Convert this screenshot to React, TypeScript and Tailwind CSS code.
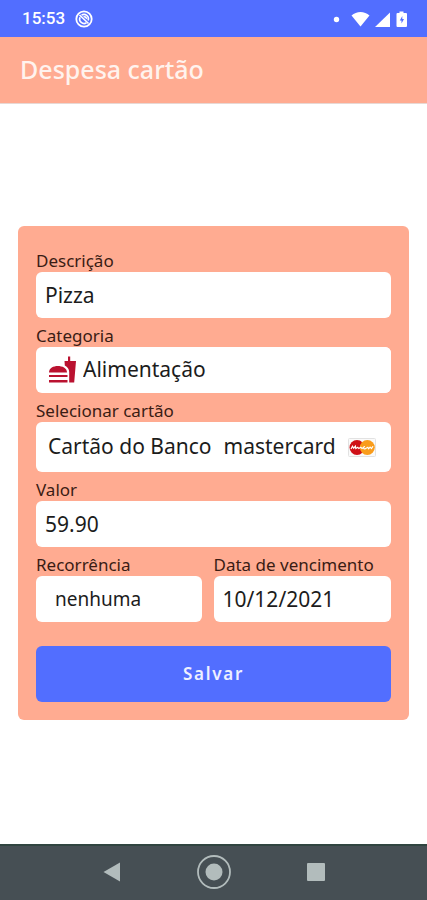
import React, { useState } from 'react';

const labelClass = 'block h-[22px] text-[17px] leading-[22px] text-[#3a1c14]';
const fieldClass = 'w-full min-w-0 rounded-md bg-white text-[#1c1c1c] outline-none appearance-none';

const FastFoodIcon = () => (
  <svg viewBox="0 0 28 28" className="h-7 w-7 shrink-0" fill="#ba1230" aria-hidden="true">
    <path d="M1 16.5C1 12 5.500 10 9.800 10s9.200 2 9.200 6.500z" />
    <path d="M1 19h18.500v2H1zM1 24h18.500v2.500H1z" />
    <path d="M16.500 5H20V.5h2.200V5H28l-1.800 21.500h-5V16c0-3-1.700-5-4.400-6.500z" />
  </svg>
);

const MastercardIcon = () => (
  <svg viewBox="0 0 28 19" className="h-[19px] w-7 shrink-0" aria-hidden="true">
    <rect x=".5" y=".5" width="27" height="18" rx="1" fill="#fafafa" stroke="#e2e2e2" />
    <circle cx="9" cy="9.500" r="7.500" fill="#cf1017" />
    <circle cx="19.300" cy="9.500" r="7.500" fill="#f99c1b" />
    <path
      d="M3 11l1.500-2.800 1.200 2 1.700-2 .4 2.300 2-1.300 1 1.300 2-1.300 1.200 1.300 2-1.200M17 8.500c-2 0-2 2.800.3 2.300l2.500-1.500.8 1.500 1.500-1.700 1.400 1.500L25 8.200"
      fill="none"
      stroke="#fff"
      strokeWidth="1.200"
    />
  </svg>
);

const StatusBar = () => (
  <div className="flex h-[37px] items-center justify-between bg-[#526eff] pr-5 pl-[22px] text-white">
    <div className="flex items-center gap-[10px]">
      <span className="font-[Roboto,sans-serif] text-[17px] font-medium">15:53</span>
      <svg viewBox="0 0 18 18" className="h-[18px] w-[18px]" fill="none" stroke="#fff" aria-hidden="true">
        <circle cx="9" cy="9" r="7.700" strokeWidth="1.800" />
        <path d="M5 7.200a4.500 4.500 0 0 0 6.500 5.600M6.500 5.200a4.500 4.500 0 0 1 6.700 5.300" strokeWidth="1.600" />
        <path d="M4.500 5l9 8.500" strokeWidth="1.700" />
        <path d="M8 6.500c2-1.500 4.500 0 4.300 3z" fill="#fff" stroke="none" />
      </svg>
    </div>
    <svg viewBox="0 0 75 18" className="h-[18px] w-[75px]" fill="#fff" aria-hidden="true">
      <circle cx="4.500" cy="9.500" r="2.700" />
      <path d="M19.500 5.500C24.500.8 32.500.8 37.500 5.500L28.500 16.500z" />
      <path d="M58 2.500v14.500H43z" />
      <path d="M67.500 3V1.500h4V3H74a1 1 0 0 1 1 1v12a1 1 0 0 1-1 1h-8.500a1 1 0 0 1-1-1V4a1 1 0 0 1 1-1z" />
      <path d="M70.300 6l-2.500 4.500h1.700V13.500l2.500-4.500h-1.700z" fill="#526eff" />
    </svg>
  </div>
);

const NavigationBar = () => (
  <nav className="flex h-14 items-center justify-center gap-[68px] border-t-2 border-[#304540] bg-[#464f54] pb-0.5">
    <button type="button" aria-label="Voltar" className="flex w-[34px] justify-center">
      <svg viewBox="0 0 18 20" className="h-5 w-[18px]" fill="#b2bcbc">
        <path d="M.5 10L17 .5v19z" />
      </svg>
    </button>
    <button type="button" aria-label="Início" className="flex w-[34px] justify-center">
      <svg viewBox="0 0 34 34" className="h-[34px] w-[34px]" fill="#b2bcbc">
        <circle cx="17" cy="17" r="16" fill="none" stroke="#b2bcbc" strokeWidth="1.800" />
        <circle cx="17" cy="17" r="8.500" />
      </svg>
    </button>
    <button type="button" aria-label="Recentes" className="flex w-[34px] justify-center">
      <span className="h-[18px] w-[18px] rounded-[1px] bg-[#b2bcbc]" />
    </button>
  </nav>
);

export default function App() {
  const [description, setDescription] = useState('Pizza');
  const [category, setCategory] = useState('Alimentação');
  const [value, setValue] = useState('59.90');
  const [recurrence, setRecurrence] = useState('nenhuma');
  const [dueDate, setDueDate] = useState('10/12/2021');

  return (
    <div className="flex min-h-screen flex-col bg-white font-['Noto_Sans',sans-serif]">
      <StatusBar />
      <header className="flex h-[67px] items-center border-b border-[#e8d8d4] bg-[#ffab91] px-5">
        <h1 className="text-[25px] font-medium text-[#fff3ee]">Despesa cartão</h1>
      </header>

      <main className="flex flex-1 flex-col justify-center px-[18px] pb-0.5">
        <form
          className="flex flex-col gap-[7px] rounded-md bg-[#ffab91] px-[18px] pt-6 pb-[18px]"
          onSubmit={(e) => e.preventDefault()}
        >
          <div>
            <label htmlFor="description" className={labelClass}>Descrição</label>
            <input
              id="description"
              className={`${fieldClass} h-[46px] px-[9px] text-[21px]`}
              value={description}
              onChange={(e) => setDescription(e.target.value)}
            />
          </div>

          <div>
            <label htmlFor="category" className={labelClass}>Categoria</label>
            <div className="flex h-[46px] items-center gap-[7px] rounded-md bg-white pl-3">
              <FastFoodIcon />
              <select
                id="category"
                className={`${fieldClass} h-[46px] text-[21px]`}
                value={category}
                onChange={(e) => setCategory(e.target.value)}
              >
                <option>Alimentação</option>
              </select>
            </div>
          </div>

          <div>
            <span id="card-label" className={labelClass}>Selecionar cartão</span>
            <button
              type="button"
              aria-labelledby="card-label card-value"
              aria-haspopup="listbox"
              className={`${fieldClass} flex h-[50px] items-center gap-3 px-3 text-[21px]`}
            >
              <span id="card-value" className="flex gap-3 whitespace-nowrap">
                <span>Cartão do Banco</span>
                <span>mastercard</span>
              </span>
              <MastercardIcon />
            </button>
          </div>

          <div>
            <label htmlFor="value" className={labelClass}>Valor</label>
            <input
              id="value"
              inputMode="decimal"
              className={`${fieldClass} h-[46px] px-[9px] text-[21px]`}
              value={value}
              onChange={(e) => setValue(e.target.value)}
            />
          </div>

          <div className="grid grid-cols-[166fr_178fr] gap-3">
            <div>
              <label htmlFor="recurrence" className={labelClass}>Recorrência</label>
              <select
                id="recurrence"
                className={`${fieldClass} h-[46px] px-[19px] text-[19px]`}
                value={recurrence}
                onChange={(e) => setRecurrence(e.target.value)}
              >
                <option>nenhuma</option>
              </select>
            </div>
            <div>
              <label htmlFor="due-date" className={labelClass}>Data de vencimento</label>
              <input
                id="due-date"
                className={`${fieldClass} h-[46px] px-[9px] text-[21px]`}
                value={dueDate}
                onChange={(e) => setDueDate(e.target.value)}
              />
            </div>
          </div>

          <button
            type="submit"
            className="mt-[17px] h-14 rounded-md bg-[#526eff] text-[17px] font-semibold tracking-widest text-[#eef0ff]"
          >
            Salvar
          </button>
        </form>
      </main>

      <NavigationBar />
    </div>
  );
}
